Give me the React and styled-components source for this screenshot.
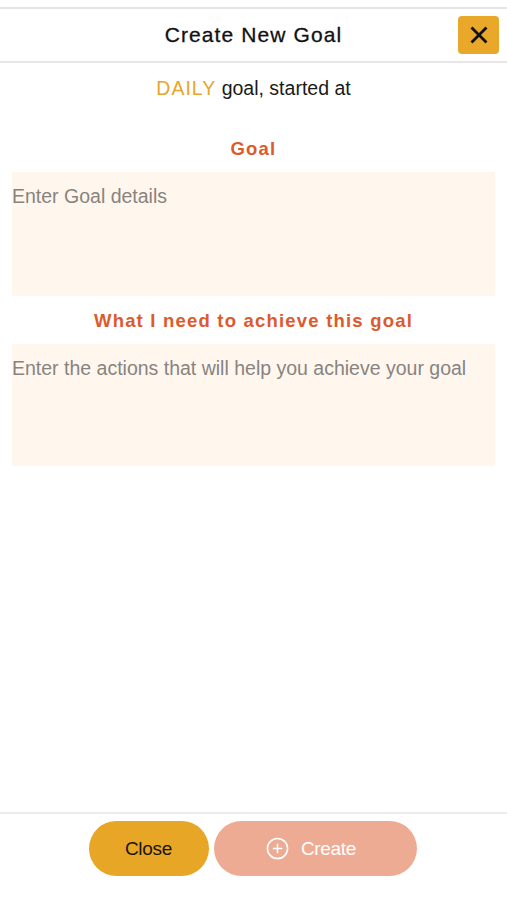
import React from "react";
import styled, { createGlobalStyle } from "styled-components";

const Global = createGlobalStyle`
  html, body { margin: 0; padding: 0; background: #fff; }
  body { font-family: "Liberation Sans", Arial, sans-serif; }
  * { box-sizing: border-box; }
`;

const Page = styled.div`
  height: 900px;
  display: flex;
  flex-direction: column;
  padding-top: 7px;
  background: #fff;
`;

const Header = styled.header`
  height: 56px;
  border-top: 2px solid #e6e6e6;
  border-bottom: 2px solid #e6e6e6;
  position: relative;
  display: flex;
  align-items: center;
  justify-content: center;
`;

const Title = styled.h1`
  margin: 0;
  font-size: 21px;
  font-weight: 400;
  letter-spacing: 1.1px;
  color: #111;
  -webkit-text-stroke: 0.3px #111;
`;

const IconButton = styled.button`
  position: absolute;
  right: 8px;
  top: 7px;
  width: 41px;
  height: 38px;
  border: none;
  border-radius: 4px;
  background: #e9a82a;
  display: flex;
  align-items: center;
  justify-content: center;
  padding: 0;
`;

const Content = styled.main`
  flex: 1;
  display: flex;
  flex-direction: column;
  padding: 14px 12px 0;
`;

const Subtitle = styled.p`
  margin: 0;
  text-align: center;
  font-size: 19.5px;
  line-height: 22px;
  color: #1a1a1a;
`;

const Freq = styled.span`
  color: #e8a62a;
  letter-spacing: 1px;
`;

const Label = styled.h2`
  margin: ${(p) => p.$top}px 0 13px;
  text-align: center;
  font-size: 18.5px;
  line-height: 21px;
  font-weight: 700;
  letter-spacing: 1.2px;
  color: #dc5a2c;
`;

const Area = styled.textarea`
  display: block;
  width: 100%;
  height: ${(p) => p.$h}px;
  border: none;
  outline: none;
  resize: none;
  background: #fff6ee;
  padding: 13px 0 0;
  font-family: "Liberation Sans", Arial, sans-serif;
  font-size: 19.5px;
  line-height: 22px;
  color: #333;
  &::placeholder { color: #878480; }
`;

const Footer = styled.footer`
  height: 88px;
  border-top: 2px solid #ececec;
  display: flex;
  justify-content: center;
  align-items: flex-start;
  gap: 5px;
  padding: 7px 2px 0 0;
`;

const Pill = styled.button`
  height: 55px;
  width: ${(p) => p.$w}px;
  border: none;
  border-radius: 28px;
  background: ${(p) => p.$bg};
  color: ${(p) => p.$fg};
  font-family: "Liberation Sans", Arial, sans-serif;
  font-size: 19px;
  letter-spacing: -0.3px;
  display: flex;
  align-items: center;
  justify-content: center;
  gap: 12px;
  padding: 0 ${(p) => p.$pr || 0}px 0 0;
`;

export default function App() {
  return (
    <>
      <Global />
      <Page>
        <Header>
          <Title>Create New Goal</Title>
          <IconButton aria-label="close">
            <svg width="18" height="18" viewBox="0 0 18 18">
              <path d="M2.5 2.5 L15.5 15.5 M15.5 2.5 L2.5 15.5" stroke="#111" strokeWidth="2.8" strokeLinecap="square" />
            </svg>
          </IconButton>
        </Header>
        <Content>
          <Subtitle>
            <Freq>DAILY</Freq> goal, started at
          </Subtitle>
          <Label $top={39}>Goal</Label>
          <Area $h={124} placeholder="Enter Goal details" />
          <Label $top={14}>What I need to achieve this goal</Label>
          <Area $h={122} placeholder="Enter the actions that will help you achieve your goal" />
        </Content>
        <Footer>
          <Pill $w={120} $bg="#e8a627" $fg="#1b1408">Close</Pill>
          <Pill $w={203} $pr={8} $bg="#eeab93" $fg="#fff">
            <svg width="23" height="23" viewBox="0 0 24 24" fill="none" stroke="#fff" strokeWidth="1.6">
              <circle cx="12" cy="12" r="10.5" />
              <path d="M12 7v10M7 12h10" />
            </svg>
            Create
          </Pill>
        </Footer>
      </Page>
    </>
  );
}
